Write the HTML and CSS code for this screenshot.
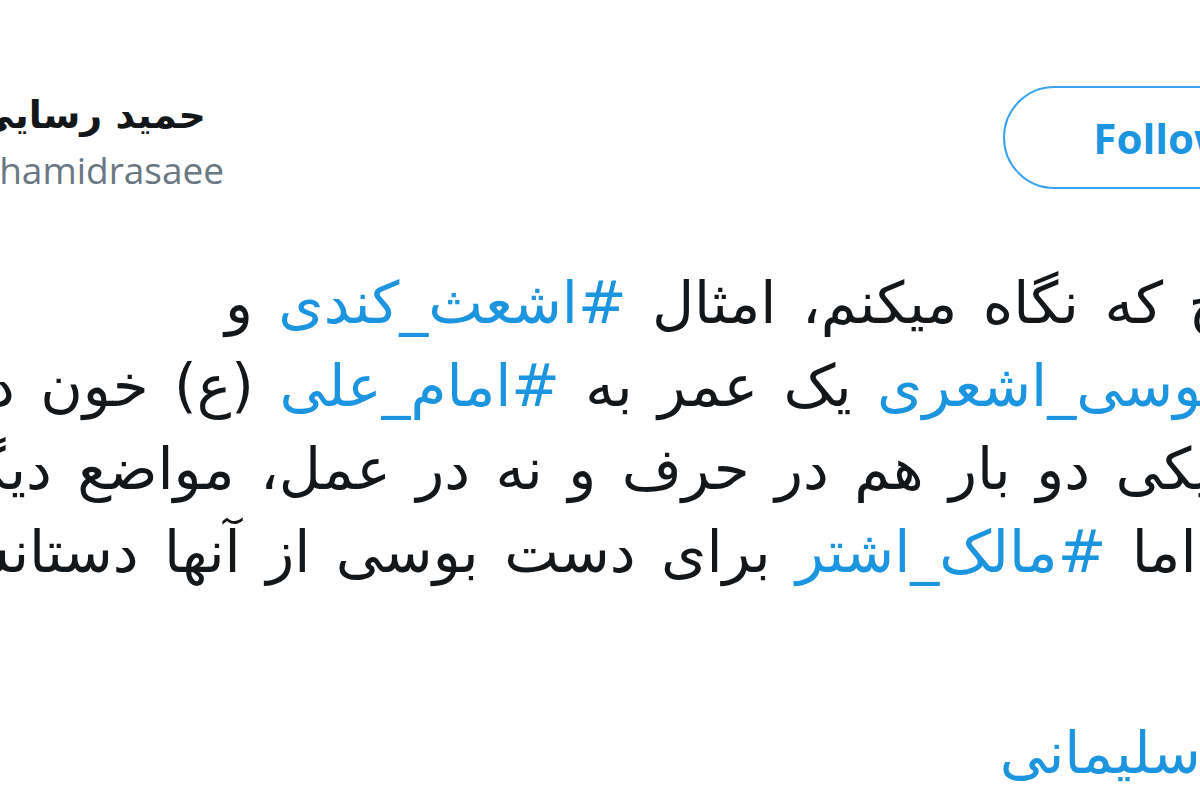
FILE: index.html
```html
<!DOCTYPE html>
<html lang="fa">
<head>
	<meta charset="utf-8" />
	<title>توییت</title>
	<link rel="stylesheet" href="styles.css">
</head>
<body>
<div class="tweet">
	<!-- سر توییت: عکس، نام، دکمه -->
	<div class="tweet-header">
		<div class="avatar"></div>
		<div class="author">
			<div class="author-name">حمید رسایی</div>
			<div class="author-handle">@hamidrasaee</div>
		</div>
		<div class="follow-btn">Follow</div>
	</div>
	<!-- متن توییت، هر سطر جدا -->
	<div class="tweet-text">
		<div class="line line-1">تاریخ که نگاه میکنم، امثال <span class="tag">#اشعث_کندی</span> و</div>
		<div class="line line-2"><span class="tag">#ابوموسی_اشعری</span> یک عمر به <span class="tag">#امام_علی</span> (ع) خون دل دادند</div>
		<div class="line line-3">یکی دو بار هم در حرف و نه در عمل، مواضع دیگر</div>
		<div class="line line-4">و اما <span class="tag">#مالک_اشتر</span> برای دست بوسی از آنها دستانشان را</div>
		<div class="line line-blank">&nbsp;</div>
		<div class="line line-6"><span class="tag">#سردار_سلیمانی</span></div>
	</div>
</div>
</body>
</html>
```

FILE: styles.css
```css
/* صفحه */
body {
	margin: 0;
	background-color: #ffffff;
	width: 1200px;
	height: 800px;
	overflow: hidden;
}
/* کارت توییت، بزرگتر از پنجره */
.tweet {
	margin-left: -130px;
	margin-right: -120px;
	padding-top: 84px;
}
.tweet-header {
	display: flex;
	align-items: flex-start;
}
.avatar {
	width: 80px;
	height: 80px;
	border-radius: 50%;
	background-color: #ccd6dd;
	margin-right: 16px;
	flex-shrink: 0;
}
.author {
	display: flex;
	flex-direction: column;
	align-items: flex-start;
	margin-left: -6px;
}
.author-name {
	font-family: "DejaVu Sans", sans-serif;
	font-weight: bold;
	font-size: 38px;
	line-height: 62px;
	color: #14171a;
	unicode-bidi: plaintext;
	margin-left: 16px;
}
.author-handle {
	font-family: "Open Sans", sans-serif;
	font-size: 37px;
	line-height: 48px;
	color: #697882;
	margin-left: 6px;
}
/* دکمه دنبال کردن */
.follow-btn {
	margin-left: auto;
	margin-top: 2px;
	height: 99px;
	padding: 0 88px;
	border: 2px solid #3aa3f0;
	border-radius: 52px;
	font-family: "Open Sans", sans-serif;
	font-weight: bold;
	font-size: 42px;
	line-height: 99px;
	color: #1b95e0;
}
/* متن توییت */
.tweet-text {
	margin-top: 68px;
	margin-right: -120px;
	font-family: "DejaVu Sans", sans-serif;
	font-size: 58px;
	line-height: 83px;
	word-spacing: 7px;
	color: #14171a;
}
.line {
	direction: rtl;
	text-align: right;
	white-space: nowrap;
}
/* جای شروع هر سطر در برش تصویر */
.line-1 {
	padding-right: 136px;
}
.line-2 {
	padding-right: 95px;
}
.line-3 {
	padding-right: 228px;
}
.line-4 {
	padding-right: 190px;
}
.line-6 {
	padding-right: 11px;
}
.line-blank {
	height: 118px;
}
.tag {
	color: #1b95e0;
}
```
